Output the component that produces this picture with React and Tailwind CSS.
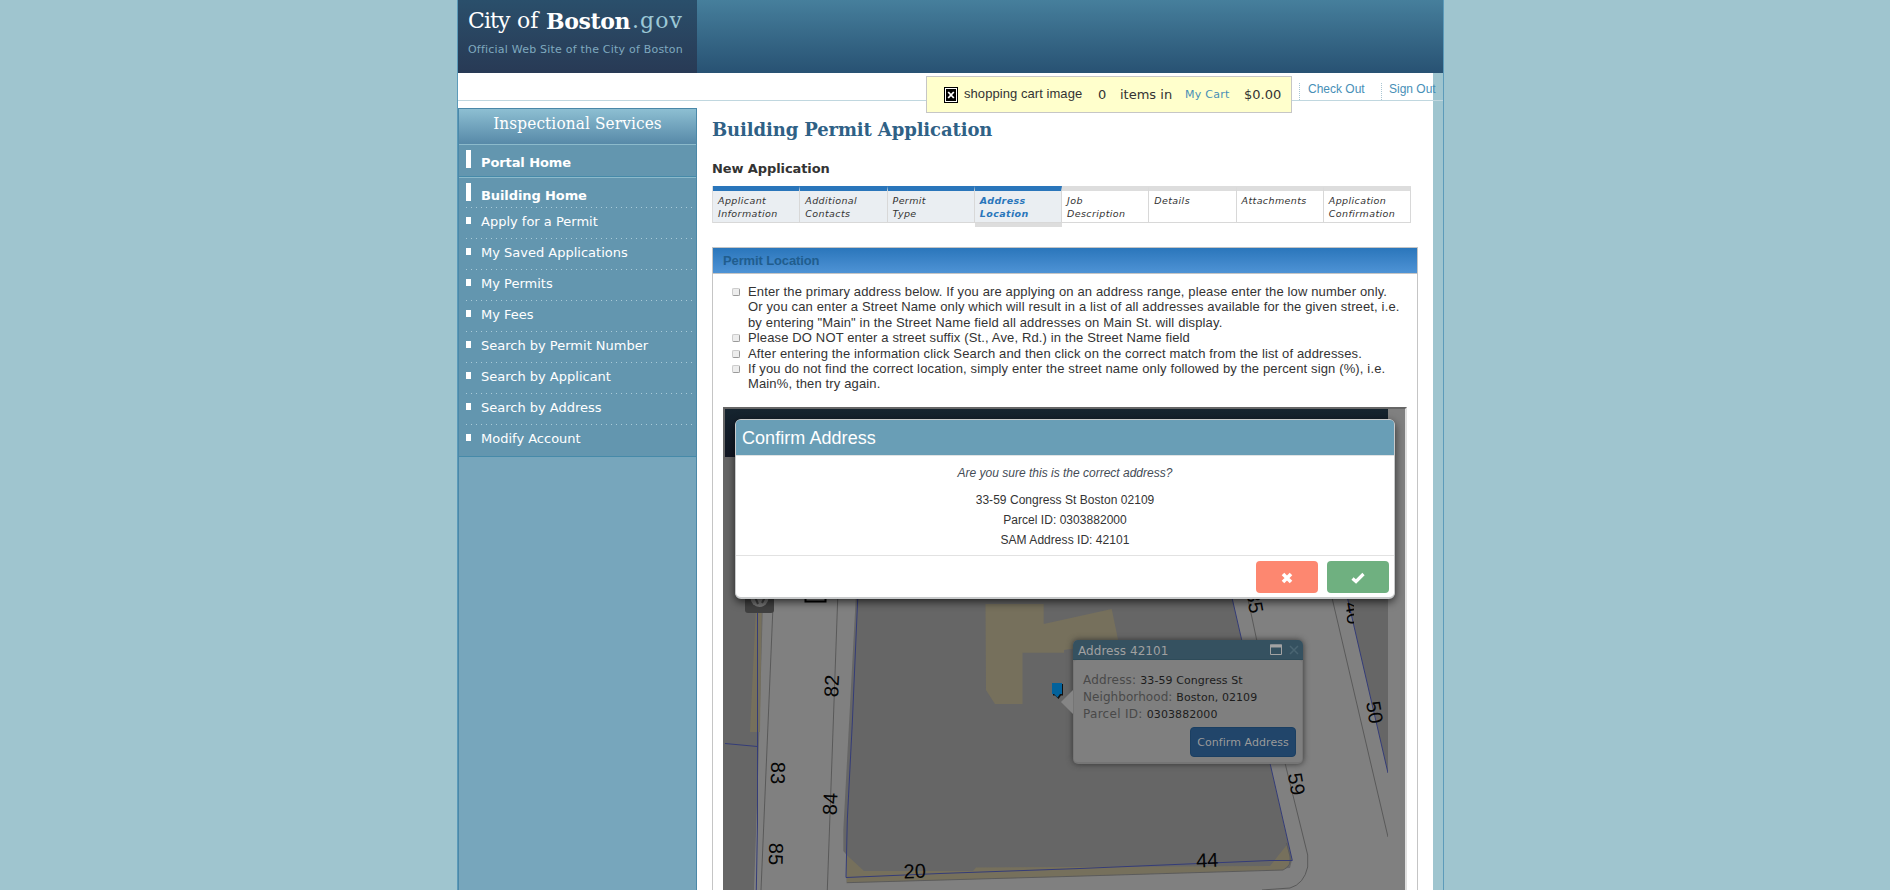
const NAV = [
  'Apply for a Permit',
  'My Saved Applications',
  'My Permits',
  'My Fees',
  'Search by Permit Number',
  'Search by Applicant',
  'Search by Address',
  'Modify Account',
];

const STEPS = [
  ['Applicant', 'Information', 'done'],
  ['Additional', 'Contacts', 'done'],
  ['Permit', 'Type', 'done'],
  ['Address', 'Location', 'current'],
  ['Job', 'Description', 'todo'],
  ['Details', '', 'todo'],
  ['Attachments', '', 'todo'],
  ['Application', 'Confirmation', 'todo'],
];

const STEP_STYLE = {
  done: 'border-t-[#2a76bb] bg-[#eaeef2]',
  current: 'border-t-[#2a76bb] bg-[#eaeef2] font-bold text-[#2a76bb] shadow-[0_4px_0_#dddddd]',
  todo: 'border-t-[#dddddd] bg-white',
};

const HINTS = [
  [
    'Enter the primary address below. If you are applying on an address range, please enter the low number only.',
    'Or you can enter a Street Name only which will result in a list of all addresses available for the given street, i.e.',
    'by entering "Main" in the Street Name field all addresses on Main St. will display.',
  ],
  ['Please DO NOT enter a street suffix (St., Ave, Rd.) in the Street Name field'],
  ['After entering the information click Search and then click on the correct match from the list of addresses.'],
  [
    'If you do not find the correct location, simply enter the street name only followed by the percent sign (%), i.e.',
    'Main%, then try again.',
  ],
];

const LABELS = [
  ['82', 831.5, 686, -87],
  ['84', 830, 804, -87],
  ['83', 778, 773, 91],
  ['85', 776, 854, 91],
  ['20', 914.7, 871, -2],
  ['44', 1207.3, 860, -2],
  ['59', 1296.7, 784, 80],
  ['50', 1374.7, 712.3, 80],
  ['35', 1255, 602, 80],
];

function Header() {
  return (
    <header className="flex h-[73px] w-[985px] shrink-0 bg-linear-to-b from-[#467f9c] to-[#285273]">
      <div className="h-[73px] w-[239px] bg-linear-to-b from-[#2a4f6b] to-[#283a55] pl-[10px] pt-[5px]">
        <div className="flex h-8 items-center whitespace-nowrap font-['DejaVu_Serif',serif] text-[22px] leading-8 text-white">
          <span className="w-[49px] tracking-[-0.9px]">City</span>
          <span className="w-[29px]">of</span>
          <span className="w-[86px] font-bold tracking-[-0.4px]">Boston</span>
          <span className="tracking-[1.1px] text-[#9cc8d6]">.gov</span>
        </div>
        <div className="whitespace-nowrap pt-px font-['DejaVu_Sans',sans-serif] text-[11px] leading-6 tracking-[0.21px] text-[#7fa9bf]">
          Official Web Site of the City of Boston
        </div>
      </div>
    </header>
  );
}

function Toolbar() {
  return (
    <div className="relative flex h-[28px] w-[985px] shrink-0 border-b border-[#c0d7df] font-['Liberation_Sans',sans-serif] text-[12px]">
      <div className="w-[975px] bg-white" />
      <div className="absolute left-[468px] top-[3px] z-10 flex h-[37px] w-[366px] items-center whitespace-nowrap border border-[#c6c6c6] bg-[#ffffcc] pl-[17px] text-[13px] text-[#333]">
        <svg width="14" height="16" viewBox="0 0 14 16">
          <rect width="14" height="16" fill="#000" />
          <rect x="1" y="1" width="12" height="14" fill="#fff" />
          <rect x="2" y="2" width="10" height="12" fill="#000" />
          <path d="M4.2 5l5.600 6M9.800 5l-5.600 6" stroke="#fff" strokeWidth="1.800" />
        </svg>
        <span className="ml-[6px] w-[134px] pb-px tracking-[0.06px]">shopping cart image</span>
        <span className="w-[22px] font-['DejaVu_Sans',sans-serif]">0</span>
        <span className="w-[65px] font-['DejaVu_Sans',sans-serif]">items in</span>
        <span className="w-[59px] pt-px font-['DejaVu_Sans',sans-serif] text-[11px] tracking-[0.25px] text-[#478fb7]">My Cart</span>
        <span className="font-['DejaVu_Sans',sans-serif]">$0.00</span>
      </div>
      <div className="absolute left-[841px] top-[10px] flex h-[17px] whitespace-nowrap leading-[13px] text-[#478fb7]">
        <span className="w-[82px] border-l border-dotted border-[#a9c6d3] pl-[8px]">Check Out</span>
        <span className="border-l border-dotted border-[#a9c6d3] pl-[7px]">Sign Out</span>
      </div>
    </div>
  );
}

function Sidebar() {
  return (
    <aside className="w-[239px] shrink-0 border-x border-[#4b88a8] bg-[#77a6bc] font-['DejaVu_Sans',sans-serif] text-white">
      <div className="h-[37px] border-b border-t border-b-[#8cbacb] border-t-[#4b88a8] bg-linear-to-b from-[#8dbfd2] to-[#5789a8] text-center font-['DejaVu_Serif_Condensed','DejaVu_Serif',serif] text-[17px] leading-[29px] tracking-[0.13px]">
        Inspectional Services
      </div>
      <nav className="border-b border-[#468aa9] bg-[#6396af] pb-px text-[13px]">
        <div className="flex h-[32px] items-start border-b border-[#468aa9] pl-[7px] pt-[5px] font-bold">
          <i className="h-[18px] w-[5px] bg-white" />
          <span className="pl-[10px] pt-[3px] leading-5 tracking-[-0.1px]">Portal Home</span>
        </div>
        <div className="flex h-[30px] items-start border-t border-[#8cbacb] pl-[7px] pt-[5px] font-bold">
          <i className="h-[18px] w-[5px] bg-white" />
          <span className="pl-[10px] pt-[3px] leading-5 tracking-[-0.1px]">Building Home</span>
        </div>
        {NAV.map((label) => (
          <div key={label} className="pl-[7px]">
            <div className="flex h-[31px] items-start bg-[radial-gradient(circle_at_0.5px_0.5px,#a9cad8_0.7px,transparent_0.8px)] bg-[length:5px_1px] bg-repeat-x pt-[10px]">
              <i className="h-[7px] w-[5px] bg-white" />
              <span className="-mt-[5px] whitespace-nowrap pl-[10px] text-[13px] leading-5">{label}</span>
            </div>
          </div>
        ))}
      </nav>
    </aside>
  );
}

function Steps() {
  return (
    <div className="mt-[7px] flex h-[37px] w-[699px] border-l border-[#dddddd] font-['DejaVu_Sans',sans-serif] text-[9.500px] italic leading-[13px] tracking-[0.4px] text-[#333]">
      {STEPS.map(([a, b, state]) => (
        <div key={a} className={'w-[12.5%] border-b border-r border-t-[5px] border-b-[#d8d8d8] border-r-[#d8d8d8] pl-[5px] pt-[3px] ' + STEP_STYLE[state]}>
          {a}
          <br />
          {b}
        </div>
      ))}
    </div>
  );
}

function ParcelMap() {
  return (
    <svg className="block shrink-0" width="663" height="481" viewBox="725 409 663 481">
      <defs>
        <linearGradient id="bar" x1="0" y1="0" x2="0" y2="1">
          <stop offset="0" stopColor="#15242f" />
          <stop offset="1" stopColor="#111622" />
        </linearGradient>
        <clipPath id="edge">
          <rect x="1346.500" y="599" width="7.500" height="40" />
        </clipPath>
      </defs>
      <rect x="725" y="409" width="663" height="481" fill="#808080" />
      <path d="M725 450H765L762.7 613L758 777L754 890H725Z" fill="#666" />
      <path d="M755.700 612H761.700L760 732H750Z" fill="#76705c" />
      <path d="M855.700 599L843.300 830V851L846.700 855V882L1290 868L1292 860L1232.300 599Z" fill="#666" />
      <path d="M846.700 855L864 871H973L976 867.500L1270 866L1286.700 845L1290 858L1289 865L1283 870L1060 876.700L846.700 882.700Z" fill="#76705c" />
      <path d="M846.700 882.700L1060 876.700L1283 870Q1292 866 1290 856L1286.500 843" fill="none" stroke="#5b5b5b" />
      <path d="M985.500 604H1043.700V624L1111.700 609L1118.500 642L1064 650V652.700H1022.500V704H995L986 690Z" fill="#76705c" />
      <path d="M1347.700 599H1388V773Z" fill="#666" />
      <g fill="none" stroke="#595959" strokeWidth="1">
        <path d="M773.300 599L761 890" />
        <path d="M837.700 599L827.300 890" />
        <path d="M1248 599L1256.700 640L1285 763L1307.700 855V867Q1304 884 1290 888L1262 890" />
        <path d="M1332.300 599L1388 837" />
      </g>
      <g fill="none" stroke="#343c78" strokeWidth="1">
        <path d="M757.500 599V823L756.300 890" />
        <path d="M725 743.500L757.500 746.500" />
        <path d="M857.700 599L852.300 723L847.300 820L846 877.500L940 873.500L1080 868.500L1270 860.500H1292.300L1232.300 599" />
        <path d="M1347.700 599L1388 773" />
      </g>
      <path d="M805.500 596V601.500H825.500V596" fill="none" stroke="#000" strokeWidth="2" />
      <g fill="#050505" fontFamily="'Liberation Sans', sans-serif" fontSize="20">
        {LABELS.map(([t, x, y, r]) => (
          <text key={t} x={x} y={y + 7} textAnchor="middle" transform={`rotate(${r} ${x} ${y})`}>
            {t}
          </text>
        ))}
        <g clipPath="url(#edge)">
          <text x="1353" y="620" textAnchor="middle" transform="rotate(80 1353 613)">
            40
          </text>
        </g>
      </g>
      <path d="M745 590H774V610Q774 613 771 613H748Q745 613 745 610Z" fill="#404040" />
      <circle cx="759.500" cy="598" r="9" fill="#757575" />
      <path d="M755 597l3 7M765 597l-3 6" stroke="#404040" strokeWidth="2" />
      <path d="M1053 684H1063V695.500H1061L1058.500 699L1055 695.500H1053Z" fill="#111" />
      <path d="M1052 683H1062V694H1060L1057.500 697.500L1054 694H1052Z" fill="#03629b" />
      <rect x="725" y="409" width="663" height="48" fill="url(#bar)" />
    </svg>
  );
}

function Popup() {
  return (
    <div className="absolute left-[348px] top-[231px] h-[124px] w-[230px] rounded-[5px] bg-[#757575] font-['DejaVu_Sans',sans-serif] shadow-[0_0_6px_#333]">
      <svg className="absolute -left-[12px] top-[50px]" width="12" height="24" viewBox="0 0 12 24">
        <path d="M12 0L0 12L12 24Z" fill="#858585" />
      </svg>
      <div className="flex h-[20px] items-center rounded-t-[5px] border-b border-[#2e4b59] bg-[#355160] pl-[5px] pt-px text-[12px] text-[#a0a0a0]">
        <span className="grow pt-[2px] tracking-[0.05px]">Address 42101</span>
        <svg className="mr-px" width="32" height="12" viewBox="0 0 32 12">
          <path d="M0.500 1H11.500V10.500H0.500Z" fill="none" stroke="#a3a3a3" />
          <path d="M0 2H12" stroke="#a3a3a3" strokeWidth="3" />
          <path d="M20 2L28 10M28 2L20 10" stroke="#4a6572" strokeWidth="1.500" />
        </svg>
      </div>
      <div className="mx-[1px] flex h-[102px] flex-col rounded-[3px] bg-[#7f7f7f] pl-[9px] pr-[10px] pt-[12px] text-[11px] leading-[17px] tracking-[0.07px] text-[#1c1c1c]">
        <div><span className="text-[12px] tracking-[0.18px] text-[#494949]">Address: </span>33-59 Congress St</div>
        <div><span className="text-[12px] text-[#494949]">Neighborhood: </span>Boston, 02109</div>
        <div><span className="text-[12px] tracking-[0.3px] text-[#494949]">Parcel ID: </span>0303882000</div>
        <div className="-mr-[4px] mt-[4px] h-[30px] w-[106px] self-end rounded-[4px] border border-[#1b3f62] bg-[#21456a] text-center leading-[29px] text-[#9a9a9a]">
          Confirm Address
        </div>
      </div>
    </div>
  );
}

function Dialog() {
  return (
    <div className="absolute left-[10px] top-[10px] flex h-[180px] w-[660px] flex-col rounded-[6px] border border-b-2 border-[#c8cacb] bg-white text-center text-[12px] text-[#333] shadow-[0_3px_8px_rgba(0,0,0,0.65)]">
      <div className="h-[36px] shrink-0 rounded-t-[4px] border-b border-[#e0e3e4] bg-[#699eb6] pl-[6px] text-left text-[18px] leading-[36px] tracking-[0.05px] text-white">
        Confirm Address
      </div>
      <div className="h-[100px] shrink-0 border-b border-[#e2e2e2] pt-[7px] leading-[20px]">
        <div className="mb-[7px] italic text-[#444c56]">Are you sure this is the correct address?</div>
        <div className="tracking-[0.04px]">33-59 Congress St Boston 02109</div>
        <div className="tracking-[0.04px]">Parcel ID: 0303882000</div>
        <div className="tracking-[0.04px]">SAM Address ID: 42101</div>
      </div>
      <div className="flex justify-end gap-[9px] pr-[5px] pt-[5px]">
        <div className="flex h-[32px] w-[62px] items-center justify-center rounded-[4px] bg-[#fd8770] pt-[2px]">
          <svg width="12" height="12" viewBox="0 0 12 12">
            <path d="M2 2L10 10M10 2L2 10" stroke="#fff" strokeWidth="3.600" />
          </svg>
        </div>
        <div className="flex h-[32px] w-[62px] items-center justify-center rounded-[4px] bg-[#6fb080] pt-[2px]">
          <svg width="14" height="12" viewBox="0 0 14 12">
            <path d="M1.500 6.500L5 9.500L12.500 2" fill="none" stroke="#fff" strokeWidth="3.200" />
          </svg>
        </div>
      </div>
    </div>
  );
}

export default function App() {
  return (
    <div className="flex h-screen justify-center overflow-hidden bg-[#9fc5cf] font-['Liberation_Sans',sans-serif]">
      <div className="ml-[11px] flex h-[900px] w-[987px] shrink-0 flex-col border-x border-[#5c9bba]">
        <Header />
        <Toolbar />
        <div className="flex w-[975px] grow bg-white pt-[7px]">
          <Sidebar />
          <main className="pl-[15px]">
            <h1 className="mt-[10px] whitespace-nowrap font-['DejaVu_Serif',serif] text-[18px] font-bold leading-[24px] tracking-[-0.12px] text-[#2f6186]">
              Building Permit Application
            </h1>
            <h2 className="mt-[17px] font-['DejaVu_Sans',sans-serif] text-[13px] font-bold leading-[20px] tracking-[-0.1px] text-[#333]">New Application</h2>
            <Steps />
            <section className="mt-[24px] h-[700px] w-[706px] border border-[#c5c5c5]">
              <div className="h-[26px] border-b border-[#c5c5c5] bg-linear-to-b from-[#2a76bb] to-[#4e93d5] pl-[10px] text-[13px] font-bold leading-[25px] tracking-[-0.12px] text-[#205d8e]">
                Permit Location
              </div>
              <ul className="pl-[19px] pt-[10px] text-[13px] leading-[15.4px] text-[#333]">
                {HINTS.map((lines) => (
                  <li key={lines[0]} className="flex whitespace-nowrap tracking-[0.14px]">
                    <i className="mr-[8px] mt-[4px] h-[8px] w-[8px] rounded-[2px] border border-[#cccccc] border-b-[#9a9a9a] border-r-[#9a9a9a] bg-[#ededed]" />
                    <div>
                      {lines.map((line) => (
                        <div key={line}>{line}</div>
                      ))}
                    </div>
                  </li>
                ))}
              </ul>
              <div className="relative ml-[10px] mt-[15px] flex h-[500px] w-[684px] border-2 border-[#666] border-r-[#e0e0e0] bg-[#808080]">
                <ParcelMap />
                <Popup />
                <Dialog />
              </div>
            </section>
          </main>
        </div>
      </div>
    </div>
  );
}
